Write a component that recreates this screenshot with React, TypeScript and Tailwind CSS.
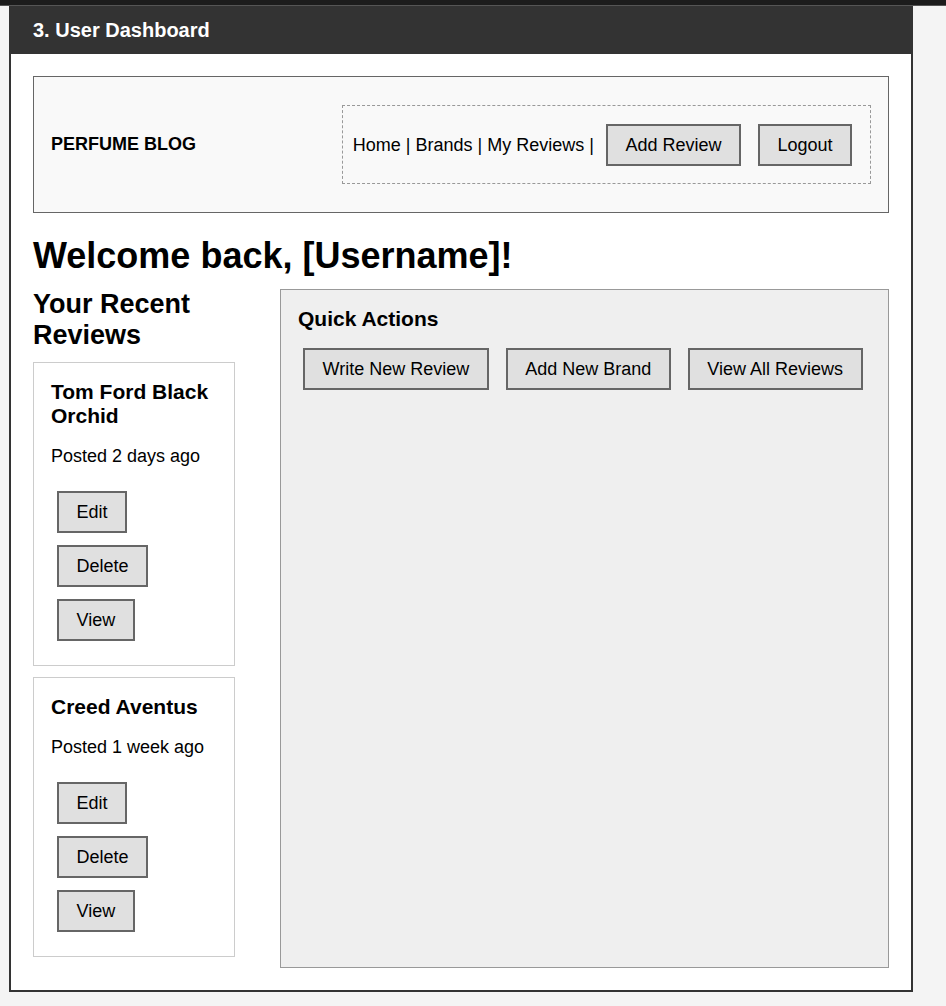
// User dashboard mockup

type Review = {
    title: string,
    posted: string
}

const reviews: Review[] = [
    { title: 'Tom Ford Black Orchid', posted: 'Posted 2 days ago' },
    { title: 'Creed Aventus', posted: 'Posted 1 week ago' },
]

const btn = "h-[42px] border-2 border-[#666] bg-[#e0e0e0] px-[17.5px] text-[18px] leading-[22px] text-black whitespace-nowrap"

function ReviewCard({ title, posted }: Review) {
    return (
        <div className="mb-[11px] border border-[#ccc] bg-white px-[17px] pt-[17px] pb-[24px]">
            <h3 className="text-[21px] leading-[24px] font-bold">{title}</h3>
            <p className="mt-[18px] text-[18px] leading-[21px]">{posted}</p>
            <div className="mt-[24px] ml-[6px] flex flex-col items-start gap-[12px]">
                <button className={btn}>Edit</button>
                <button className={btn}>Delete</button>
                <button className={btn}>View</button>
            </div>
        </div>
    )
}

export default function App() {
    return (
        <div className="min-h-[1006px] bg-[#f4f4f4] text-black" style={{ fontFamily: '"Liberation Sans", Arial, sans-serif' }}>
            <div className="h-[6px] bg-[#1c1c1c] border-b border-[#555]" />

            <div className="ml-[9px] w-[904px] border-2 border-[#333] bg-white">
                {/* title bar */}
                <div className="bg-[#333] px-[22px] pt-[11px] pb-[12px]">
                    <h1 className="text-[20px] leading-[23px] font-bold text-white">3. User Dashboard</h1>
                </div>

                <div className="px-[22px] pt-[22px] pb-[22px]">
                    {/* nav */}
                    <div className="flex items-center justify-between border border-[#666] bg-[#f9f9f9] pl-[17px] pr-[17px] py-[28px]">
                        <div className="text-[18px] font-bold">PERFUME BLOG</div>
                        <div className="flex items-center border border-dashed border-[#999] pl-[10px] pr-[18px] pt-[18px] pb-[17px]">
                            <span className="text-[18px] leading-[21px] whitespace-nowrap">Home | Brands | My Reviews |</span>
                            <button className={btn + " ml-[12px]"}>Add Review</button>
                            <button className={btn + " ml-[17px]"}>Logout</button>
                        </div>
                    </div>

                    <h1 className="mt-[22px] mb-[13px] text-[36px] leading-[41px] font-bold">Welcome back, [Username]!</h1>

                    <div className="flex gap-[45px]">
                        <div className="w-[202px] shrink-0">
                            <h2 className="mb-[11px] text-[27px] leading-[31px] font-bold">Your Recent Reviews</h2>
                            {reviews.map(r => <ReviewCard key={r.title} {...r} />)}
                        </div>

                        <div className="flex-1 border border-[#999] bg-[#efefef] p-[17px]">
                            <h3 className="text-[21px] leading-[24px] font-bold">Quick Actions</h3>
                            <div className="mt-[17px] ml-[5px] flex gap-[17px]">
                                <button className={btn}>Write New Review</button>
                                <button className={btn}>Add New Brand</button>
                                <button className={btn}>View All Reviews</button>
                            </div>
                        </div>
                    </div>
                </div>
            </div>
        </div>
    )
}
